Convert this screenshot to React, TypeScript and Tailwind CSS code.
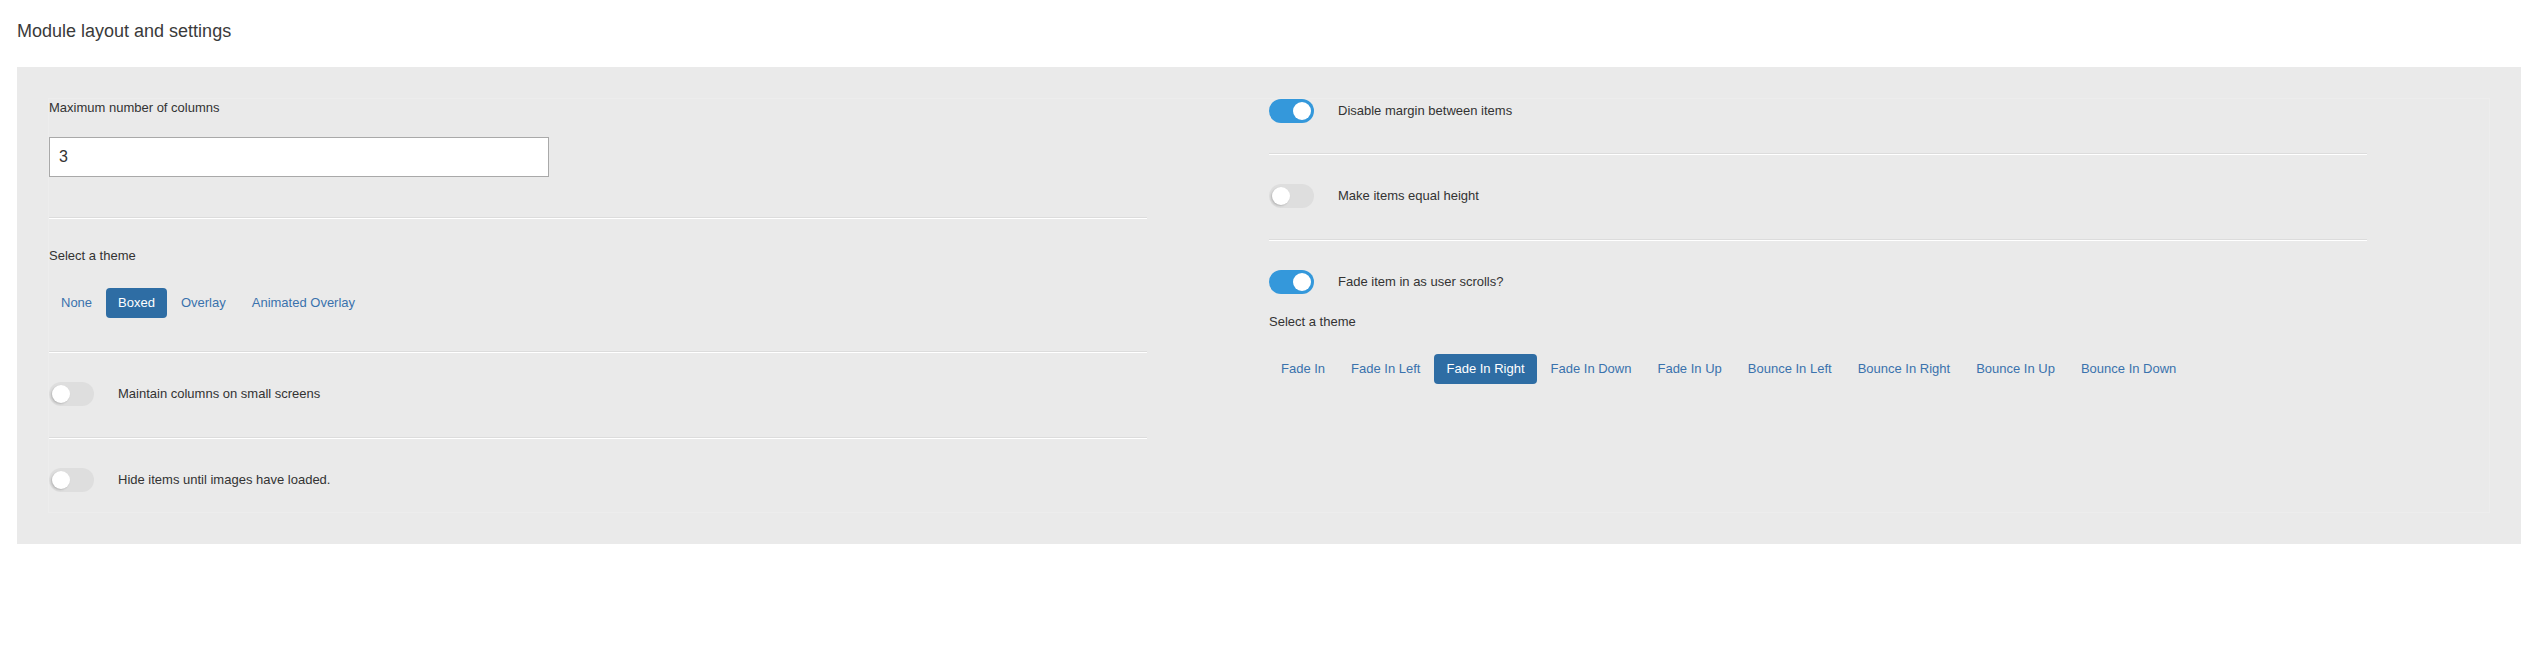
import React from 'react';

const Divider: React.FC<{ className?: string }> = ({ className = '' }) => (
  <div className={`border-t border-b border-t-[#dcdcdc] border-b-white ${className}`} />
);

const Toggle: React.FC<{ on?: boolean }> = ({ on = false }) => (
  <div
    className={`flex h-6 w-[45px] shrink-0 items-center rounded-full px-[3px] ${
      on ? 'justify-end bg-[#3498db]' : 'justify-start bg-[#dedede]'
    }`}
  >
    <span
      className={`block size-[18px] rounded-full bg-white ${
        on ? '' : 'shadow-[-1px_1px_2px_rgba(0,0,0,0.18)]'
      }`}
    />
  </div>
);

const ToggleRow: React.FC<{ label: string; on?: boolean; className?: string }> = ({
  label,
  on,
  className = '',
}) => (
  <div className={`flex items-center gap-6 ${className}`}>
    <Toggle on={on} />
    <span className="text-[13px] leading-[18px] text-[#333]">{label}</span>
  </div>
);

const ButtonGroup: React.FC<{ options: string[]; active: string; className?: string }> = ({
  options,
  active,
  className = '',
}) => (
  <div className={`flex gap-[2px] ${className}`}>
    {options.map((opt) => (
      <button
        key={opt}
        type="button"
        className={`h-[30px] rounded-[4px] px-3 text-[13px] leading-[18px] whitespace-nowrap ${
          opt === active ? 'bg-[#2e6da4] text-white' : 'text-[#3a72ad]'
        }`}
      >
        {opt}
      </button>
    ))}
  </div>
);

const Label: React.FC<{ children: React.ReactNode; className?: string }> = ({ children, className = '' }) => (
  <p className={`text-[13px] leading-[18px] text-[#333] ${className}`}>{children}</p>
);

const App: React.FC = () => {
  return (
    <div className="min-h-[648px] bg-white pt-5 pl-[17px] pr-[20px] font-['Liberation_Sans',Arial,sans-serif] text-[#333]">
      <h2 className="mb-[25px] text-[18px] leading-[22px] text-[#3a3a3a]">Module layout and settings</h2>

      <div className="bg-[#eaeaea] p-[31px]">
        <div className="grid grid-cols-2 border border-[#ededed]">
          {/* left column */}
          <div>
            <div className="w-[90%]">
              <Label>Maximum number of columns</Label>
              <input
                readOnly
                value="3"
                className="mt-5 block h-10 w-[500px] border border-[#a9a9a9] bg-white px-[9px] text-[16px] text-[#333] outline-none"
              />
              <Divider className="mt-10" />

              <Label className="mt-7">Select a theme</Label>
              <ButtonGroup
                className="mt-[23px]"
                options={['None', 'Boxed', 'Overlay', 'Animated Overlay']}
                active="Boxed"
              />
              <Divider className="mt-[33px]" />

              <ToggleRow className="mt-[29px]" label="Maintain columns on small screens" />
              <Divider className="mt-[31px]" />

              <ToggleRow className="mt-[29px]" label="Hide items until images have loaded." />
              <div className="h-5" />
            </div>
          </div>

          {/* right column */}
          <div>
            <div className="w-[90%]">
              <ToggleRow on label="Disable margin between items" />
              <Divider className="mt-[30px]" />

              <ToggleRow className="mt-[29px]" label="Make items equal height" />
              <Divider className="mt-[31px]" />

              <ToggleRow className="mt-[29px]" on label="Fade item in as user scrolls?" />
              <Label className="mt-[19px]">Select a theme</Label>
              <ButtonGroup
                className="mt-[23px]"
                options={[
                  'Fade In',
                  'Fade In Left',
                  'Fade In Right',
                  'Fade In Down',
                  'Fade In Up',
                  'Bounce In Left',
                  'Bounce In Right',
                  'Bounce In Up',
                  'Bounce In Down',
                ]}
                active="Fade In Right"
              />
            </div>
          </div>
        </div>
      </div>
    </div>
  );
};

export default App;
